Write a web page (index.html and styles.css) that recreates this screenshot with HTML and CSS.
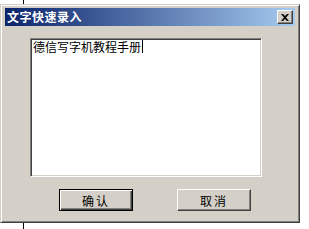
FILE: index.html
```html
<!DOCTYPE html>
<html>
<head>
<meta charset="utf-8">
<link rel="stylesheet" href="styles.css">
</head>
<body>
<div class="tick"></div>
<div class="dialog">
  <div class="titlebar">
    <span class="title">文字快速录入</span>
    <span class="close">
      <svg width="8" height="7" viewBox="0 0 8 7"><path d="M0 0h2l2 2 2-2h2L5 3.5 8 7H6L4 5 2 7H0l3-3.5z" fill="#000"/></svg>
    </span>
  </div>
  <div class="content">
    <div class="edit"><span class="text">德信写字机教程手册</span><span class="caret"></span></div>
    <div class="buttons">
      <button class="btn default">确认</button>
      <button class="btn">取消</button>
    </div>
  </div>
</div>
<div class="tick bottom"></div>
</body>
</html>
```
FILE: styles.css
```css
html, body {
  margin: 0;
  padding: 0;
  background: #fff;
  width: 309px;
  height: 229px;
  overflow: hidden;
  font-family: "Noto Sans CJK SC", "DejaVu Sans", sans-serif;
}
.tick {
  width: 1px;
  height: 4px;
  margin-left: 23px;
  background: #000;
}
.tick.bottom { height: 6px; }
.dialog {
  width: 300px;
  height: 219px;
  margin-left: 0;
  box-sizing: border-box;
  background: #d4d0c8;
  border-top: 1px solid #d4d0c8;
  border-left: 1px solid #d4d0c8;
  border-right: 1px solid #404040;
  border-bottom: 1px solid #404040;
  box-shadow: inset 1px 1px 0 #fff, inset -1px -1px 0 #808080;
  padding: 3px 4px 0 4px;
  display: flex;
  flex-direction: column;
}
.titlebar {
  height: 18px;
  background: linear-gradient(to right, #0a246a, #a6caf0);
  display: flex;
  align-items: center;
  justify-content: space-between;
  padding: 0 2px 0 2px;
}
.title {
  color: #fff;
  font-weight: bold;
  font-size: 12px;
  line-height: 18px;
  letter-spacing: 0.5px;
}
.close {
  width: 16px;
  height: 14px;
  box-sizing: border-box;
  background: #d4d0c8;
  border-top: 1px solid #fff;
  border-left: 1px solid #fff;
  border-right: 1px solid #404040;
  border-bottom: 1px solid #404040;
  box-shadow: inset -1px -1px 0 #808080;
  display: flex;
  align-items: center;
  justify-content: center;
}
.content {
  padding: 12px 0 0 25px;
  display: flex;
  flex-direction: column;
}
.edit {
  width: 232px;
  height: 139px;
  box-sizing: border-box;
  background: #fff;
  border-top: 1px solid #808080;
  border-left: 1px solid #808080;
  border-right: 1px solid #fff;
  border-bottom: 1px solid #fff;
  box-shadow: inset 1px 1px 0 #404040, inset -1px -1px 0 #d4d0c8;
  padding: 1px 2px;
  font-size: 12px;
  line-height: 14px;
  color: #000;
  display: flex;
  align-items: flex-start;
}
.caret {
  width: 1px;
  height: 13px;
  background: #000;
  margin-left: 1px;
}
.buttons {
  display: flex;
  gap: 44px;
  margin: 12px 0 0 29px;
}
.btn {
  width: 74px;
  height: 22px;
  margin: 0;
  padding: 0;
  box-sizing: border-box;
  background: #d4d0c8;
  font-family: "Noto Sans CJK SC", sans-serif;
  font-size: 12px;
  color: #000;
  letter-spacing: 2px;
  border-top: 1px solid #fff;
  border-left: 1px solid #fff;
  border-right: 1px solid #404040;
  border-bottom: 1px solid #404040;
  box-shadow: inset -1px -1px 0 #808080;
}
.btn.default {
  border: 1px solid #000;
  box-shadow: inset 1px 1px 0 #fff, inset -1px -1px 0 #404040, inset -2px -2px 0 #808080;
}
```
